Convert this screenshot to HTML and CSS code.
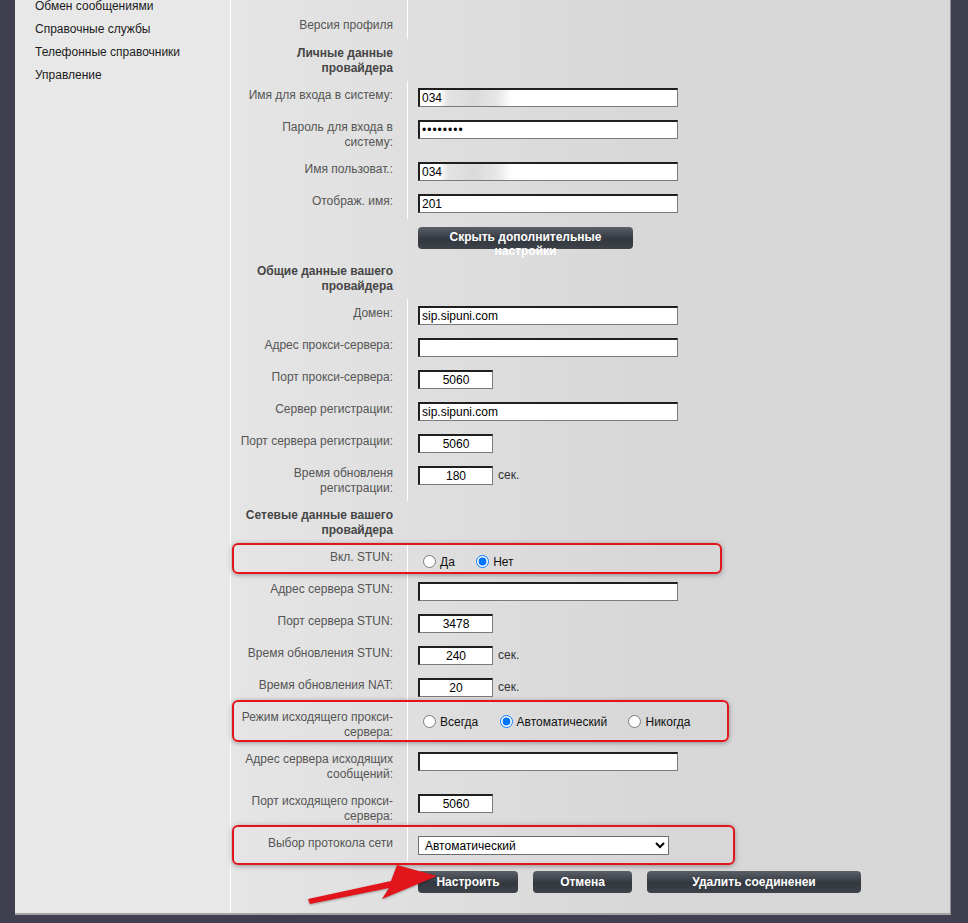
FILE: index.html
```html
<!DOCTYPE html>
<html>
<head>
    <meta charset="utf-8">
    <title>Настройки соединения</title>
    <link rel="stylesheet" href="styles.css">
</head>
<body>
    <div class="panel">
        <div class="sidebar">
            <ul class="menu">
                <li>Обмен сообщениями</li>
                <li>Справочные службы</li>
                <li>Телефонные справочники</li>
                <li>Управление</li>
            </ul>
        </div>

        <div class="content">
            <table class="form">
                <tr class="first">
                    <td class="label">Версия профиля</td>
                    <td class="field"></td>
                </tr>
                <tr>
                    <td class="label head">Личные данные провайдера</td>
                    <td></td>
                </tr>
                <tr>
                    <td class="label">Имя для входа в систему:</td>
                    <td class="field"><input type="text" class="wide hidden-value" value="034"></td>
                </tr>
                <tr>
                    <td class="label">Пароль для входа в систему:</td>
                    <td class="field"><input type="password" class="wide" value="12345678"></td>
                </tr>
                <tr>
                    <td class="label">Имя пользоват.:</td>
                    <td class="field"><input type="text" class="wide hidden-value" value="034"></td>
                </tr>
                <tr>
                    <td class="label">Отображ. имя:</td>
                    <td class="field"><input type="text" class="wide" value="201"></td>
                </tr>
                <tr>
                    <td></td>
                    <td class="field buttons"><a href="#" class="btn btn-more">Скрыть дополнительные настройки</a></td>
                </tr>
                <tr>
                    <td class="label head">Общие данные вашего провайдера</td>
                    <td></td>
                </tr>
                <tr>
                    <td class="label">Домен:</td>
                    <td class="field"><input type="text" class="wide" value="sip.sipuni.com"></td>
                </tr>
                <tr>
                    <td class="label">Адрес прокси-сервера:</td>
                    <td class="field"><input type="text" class="wide" value=""></td>
                </tr>
                <tr>
                    <td class="label">Порт прокси-сервера:</td>
                    <td class="field"><input type="text" class="short" value="5060"></td>
                </tr>
                <tr>
                    <td class="label">Сервер регистрации:</td>
                    <td class="field"><input type="text" class="wide" value="sip.sipuni.com"></td>
                </tr>
                <tr>
                    <td class="label">Порт сервера регистрации:</td>
                    <td class="field"><input type="text" class="short" value="5060"></td>
                </tr>
                <tr>
                    <td class="label">Время обновленя регистрации:</td>
                    <td class="field"><input type="text" class="short" value="180"><span class="unit">сек.</span></td>
                </tr>
                <tr>
                    <td class="label head">Сетевые данные вашего провайдера</td>
                    <td></td>
                </tr>
                <tr>
                    <td class="label">Вкл. STUN:</td>
                    <td class="field radios">
                        <label><input type="radio" name="stun">Да</label>
                        <label><input type="radio" name="stun" checked>Нет</label>
                    </td>
                </tr>
                <tr>
                    <td class="label">Адрес сервера STUN:</td>
                    <td class="field"><input type="text" class="wide" value=""></td>
                </tr>
                <tr>
                    <td class="label">Порт сервера STUN:</td>
                    <td class="field"><input type="text" class="short" value="3478"></td>
                </tr>
                <tr>
                    <td class="label">Время обновления STUN:</td>
                    <td class="field"><input type="text" class="short" value="240"><span class="unit">сек.</span></td>
                </tr>
                <tr>
                    <td class="label">Время обновления NAT:</td>
                    <td class="field"><input type="text" class="short" value="20"><span class="unit">сек.</span></td>
                </tr>
                <tr>
                    <td class="label">Режим исходящего прокси-сервера:</td>
                    <td class="field radios">
                        <label><input type="radio" name="outproxy">Всегда</label>
                        <label><input type="radio" name="outproxy" checked>Автоматический</label>
                        <label><input type="radio" name="outproxy">Никогда</label>
                    </td>
                </tr>
                <tr>
                    <td class="label">Адрес сервера исходящих сообщений:</td>
                    <td class="field"><input type="text" class="wide" value=""></td>
                </tr>
                <tr>
                    <td class="label">Порт исходящего прокси-сервера:</td>
                    <td class="field"><input type="text" class="short" value="5060"></td>
                </tr>
                <tr>
                    <td class="label">Выбор протокола сети</td>
                    <td class="field">
                        <select class="protocol">
                            <option>Автоматический</option>
                            <option>UDP</option>
                            <option>TCP</option>
                        </select>
                    </td>
                </tr>
                <tr>
                    <td></td>
                    <td class="field actions-cell">
                        <div class="actions">
                            <a href="#" class="btn btn-action btn-set">Настроить</a>
                            <a href="#" class="btn btn-action btn-cancel">Отмена</a>
                            <a href="#" class="btn btn-action btn-delete">Удалить соединенеи</a>
                        </div>
                    </td>
                </tr>
            </table>
        </div>

        <!-- annotations drawn over the screenshot -->
        <div class="mark mark-stun"></div>
        <div class="mark mark-proxy"></div>
        <div class="mark mark-protocol"></div>
        <svg class="arrow" width="150" height="46" viewBox="0 0 150 46">
            <polygon points="15,39 17,44 96,28 89,39 144,16 104,5 98,21" fill="#e3151c" />
        </svg>
    </div>
</body>
</html>
```

FILE: styles.css
```css
html,
body {
    margin: 0;
    height: 100%;
}

body {
    background: #3f3f4f;
    font-family: "Liberation Sans", Arial, sans-serif;
    font-size: 12px;
    overflow: hidden;
}

.panel {
    position: relative;
    display: flex;
    margin-left: 15px;
    width: 935px;
    height: 913px;
    background: #e8e8e8;
    border-right: 1px solid #8e8e8e;
    border-bottom: 2px solid #a2a2a2;
}

.sidebar {
    width: 215px;
    flex: none;
    border-right: 1px solid #fff;
}

.menu {
    list-style: none;
    margin: -5px 0 0;
    padding: 0 0 0 20px;
}

.menu li {
    line-height: 23px;
    color: #1c1c1c;
}

.content {
    flex: 1;
    background: linear-gradient(to right, #e5e5e5, #d7d7d7 60%, #d8d8d8);
}

.form {
    border-spacing: 0;
}

.form td {
    padding: 0;
    vertical-align: top;
}

.form td.label {
    width: 156px;
    padding: 7px 14px 5px 6px;
    text-align: right;
    line-height: 15px;
    color: #555;
    border-right: 1px solid #fff;
}

.form tr.first td.label {
    padding-top: 18px;
    padding-bottom: 6px;
}

.form td.head {
    font-weight: bold;
    color: #464646;
    border-right-color: transparent;
}

.form td.field {
    padding: 7px 0 6px 10px;
    line-height: 19px;
}

.form tr.first td.field {
    padding: 0;
}

input[type="text"],
input[type="password"] {
    box-sizing: border-box;
    height: 19px;
    margin: 0;
    padding: 0 2px;
    vertical-align: top;
    border-style: solid;
    border-width: 2px 1px 1px 2px;
    border-color: #1f1f1f #7b7b7b #7b7b7b #1f1f1f;
    font-family: "Liberation Sans", Arial, sans-serif;
    font-size: 12px;
    color: #000;
    background: #fff;
    outline: none;
}

input[type="password"] {
    letter-spacing: 1px;
}

.wide {
    width: 260px;
}

input.short {
    width: 75px;
    text-align: center;
}

input.hidden-value {
    background: linear-gradient(to right, #fff 19px, #e4e4e4 28px, #dadada 55px, #e8e8e8 78px, #fff 92px);
}

.unit {
    margin-left: 5px;
    color: #333;
}

.form td.radios {
    padding-top: 12px;
    padding-bottom: 5px;
    line-height: 15px;
    color: #111;
}

.radios label {
    margin-right: 13px;
}

.radios input {
    width: 13px;
    height: 13px;
    margin: 0 4px 0 5px;
    vertical-align: -2px;
}

.protocol {
    box-sizing: border-box;
    width: 251px;
    height: 19px;
    margin: 0;
    padding: 0 2px;
    vertical-align: top;
    border: 1px solid #6f6f6f;
    border-radius: 0;
    background: #fff;
    font-family: "Liberation Sans", Arial, sans-serif;
    font-size: 12px;
    color: #000;
}

.form td.buttons {
    padding: 8px 0 8px 10px;
}

.form td.actions-cell {
    padding: 10px 0 0 10px;
}

.btn {
    display: block;
    box-sizing: border-box;
    height: 22px;
    border-radius: 4px;
    background: linear-gradient(#5b6069, #33373e 55%, #3e424a);
    color: #fff;
    font-weight: bold;
    text-align: center;
    text-decoration: none;
}

.btn-more {
    width: 215px;
    padding: 3px 8px 0;
    line-height: 14px;
}

.actions {
    display: flex;
    gap: 15px;
}

.btn-action {
    line-height: 22px;
}

.btn-set {
    width: 100px;
}

.btn-cancel {
    width: 99px;
}

.btn-delete {
    width: 214px;
}

.mark {
    position: absolute;
    left: 217px;
    border: 2px solid #e3151c;
    border-radius: 6px;
    box-shadow: 0 1px 5px rgba(0, 0, 0, 0.35);
}

.mark-stun {
    top: 543px;
    width: 486px;
    height: 27px;
}

.mark-proxy {
    top: 700px;
    width: 493px;
    height: 38px;
}

.mark-protocol {
    top: 825px;
    width: 499px;
    height: 36px;
}

.arrow {
    position: absolute;
    left: 278px;
    top: 860px;
    filter: drop-shadow(0 1px 1px rgba(0, 0, 0, 0.3));
}
```
